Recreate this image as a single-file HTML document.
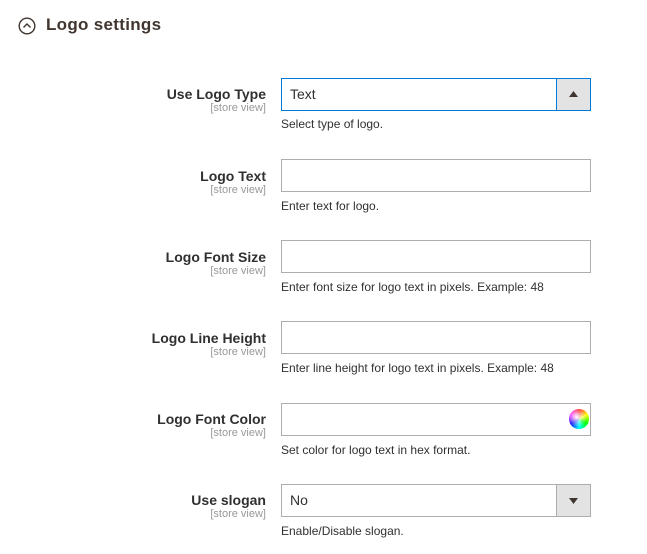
<!DOCTYPE html>
<html><head><style>
body{margin:0;width:647px;height:554px;background:#fff;font-family:"Liberation Sans",sans-serif;color:#303030;position:relative;overflow:hidden}
.a{position:absolute}
.h{left:46px;top:15px;font-size:17px;font-weight:bold;color:#41362f;letter-spacing:0.3px}
.lab{right:381px;text-align:right;font-size:14px;font-weight:bold;color:#303030;white-space:nowrap}
.sv{right:381px;font-size:11px;color:#999;text-align:right;top:0}
.in{left:281px;width:308px;height:31px;border:1px solid #adadad;background:#fff;font-size:14px}
.in span{position:absolute;left:8px;top:7px}
.btn{position:absolute;right:0;top:0;width:33px;height:31px;background:#e3e3e3;border-left:1px solid #adadad}
.note{left:281px;font-size:12px;color:#303030}
</style></head><body>
<svg class="a" style="left:18px;top:17px" width="18" height="18" viewBox="0 0 18 18"><circle cx="9" cy="9" r="7.8" fill="none" stroke="#41362f" stroke-width="1.4"/><path d="M5.5 10.5 L9 7 L12.5 10.5" fill="none" stroke="#41362f" stroke-width="1.4"/></svg>
<div class="a h">Logo settings</div>

<div class="a lab" style="top:86px">Use Logo Type</div><div class="a sv" style="top:102px">[store view]</div>
<div class="a in" style="top:78px;border-color:#007bdb"><span>Text</span><div class="btn" style="border-left-color:#007bdb"><svg class="a" style="left:12px;top:12px" width="9" height="6"><path d="M0 6 L4.5 0 L9 6Z" fill="#41362f"/></svg></div></div>
<div class="a note" style="top:117px">Select type of logo.</div>

<div class="a lab" style="top:168px">Logo Text</div><div class="a sv" style="top:184px">[store view]</div>
<div class="a in" style="top:159px"></div>
<div class="a note" style="top:199px">Enter text for logo.</div>

<div class="a lab" style="top:249px">Logo Font Size</div><div class="a sv" style="top:265px">[store view]</div>
<div class="a in" style="top:240px"></div>
<div class="a note" style="top:280px">Enter font size for logo text in pixels. Example: 48</div>

<div class="a lab" style="top:330px">Logo Line Height</div><div class="a sv" style="top:346px">[store view]</div>
<div class="a in" style="top:321px"></div>
<div class="a note" style="top:361px">Enter line height for logo text in pixels. Example: 48</div>

<div class="a lab" style="top:411px">Logo Font Color</div><div class="a sv" style="top:427px">[store view]</div>
<div class="a in" style="top:403px"><div class="a" style="right:1px;top:5px;width:20px;height:20px;border-radius:50%;background:radial-gradient(circle at 40% 40%,#fff 0,rgba(255,255,255,0) 60%),conic-gradient(#f00,#ff0,#0f0,#0ff,#00f,#f0f,#f00)"></div></div>
<div class="a note" style="top:443px">Set color for logo text in hex format.</div>

<div class="a lab" style="top:492px">Use slogan</div><div class="a sv" style="top:508px">[store view]</div>
<div class="a in" style="top:484px"><span>No</span><div class="btn"><svg class="a" style="left:12px;top:13px" width="9" height="6"><path d="M0 0 L4.5 6 L9 0Z" fill="#41362f"/></svg></div></div>
<div class="a note" style="top:524px">Enable/Disable slogan.</div>
</body></html>
